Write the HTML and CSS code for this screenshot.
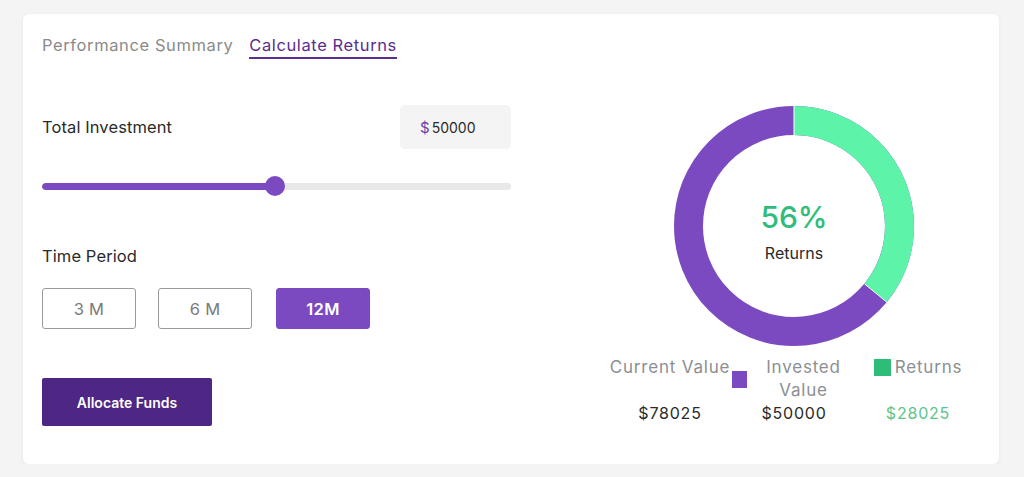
FILE: index.html
```html
<!DOCTYPE html>
<html>
<head>
<meta charset="utf-8">
<link rel="stylesheet" href="styles.css">
</head>
<body>
<div class="card">
  <div class="tabs">
    <span class="tab">Performance Summary</span>
    <span class="tab active">Calculate Returns</span>
  </div>
  <div class="body">
    <div class="left">
      <div class="inv-row">
        <span class="label">Total Investment</span>
        <div class="amount"><span class="cur">$</span>50000</div>
      </div>
      <div class="slider">
        <div class="track"><div class="fill" style="width:49.6%"></div></div>
        <div class="thumb"></div>
      </div>
      <div class="label period">Time Period</div>
      <div class="periods">
        <button class="pbtn">3 M</button>
        <button class="pbtn">6 M</button>
        <button class="pbtn on">12M</button>
      </div>
      <button class="allocate">Allocate Funds</button>
    </div>
    <div class="right">
      <div class="donut">
        <svg width="240" height="240" viewBox="0 0 240 240">
          <circle cx="120" cy="120" r="105.5" fill="none" stroke="#7b4ac0" stroke-width="29"/>
          <circle cx="120" cy="120" r="105.5" fill="none" stroke="#5df4a9" stroke-width="29" stroke-dasharray="238 663" transform="rotate(-90 120 120)"/>
          <line x1="120" y1="0" x2="120" y2="30" stroke="#fff" stroke-width="1"/>
          <line x1="190.5" y1="177.9" x2="213" y2="196.3" stroke="#fff" stroke-width="1"/>
        </svg>
        <div class="center">
          <div class="pct">56%</div>
          <div class="ret">Returns</div>
        </div>
      </div>
      <div class="legend">
        <div class="lg"><span class="lt">Current Value</span></div>
        <div class="lg"><span class="sq purple"></span><span class="lt grow">Invested Value</span></div>
        <div class="lg center-j"><span class="sq green"></span><span class="lt">Returns</span></div>
        <div class="val">$78025</div>
        <div class="val">$50000</div>
        <div class="val gr">$28025</div>
      </div>
    </div>
  </div>
</div>
</body>
</html>
```

FILE: styles.css
```css
* { box-sizing: border-box; }
html, body { margin: 0; }
body {
  background: #f4f4f5;
  padding: 14px 25px 0 23px;
  font-family: Inter, "Noto Sans", sans-serif;
  color: #2c2c2c;
}
.card {
  background: #fff;
  height: 450px;
  border-radius: 6px;
  box-shadow: 0 1px 4px rgba(0,0,0,0.06);
  padding: 20px 11px 0 19px;
}
.tabs {
  display: flex;
  gap: 16px;
}
.tab {
  font-size: 16.5px;
  line-height: 22px;
  padding-bottom: 1px;
  color: #8a8a8a;
  border-bottom: 2px solid transparent;
  letter-spacing: 0.6px;
}
.tab.active {
  color: #5a2d8e;
  border-bottom-color: #5a2d8e;
}
.body {
  display: flex;
  align-items: flex-start;
}
.left {
  width: 469px;
  margin-top: 46px;
  display: flex;
  flex-direction: column;
  align-items: flex-start;
}
.inv-row {
  width: 100%;
  height: 44px;
  display: flex;
  align-items: center;
  justify-content: space-between;
}
.label {
  font-size: 16.5px;
  font-weight: 400;
  color: #2a2a2a;
  letter-spacing: 0.1px;
}
.amount {
  width: 111px;
  height: 44px;
  background: #f4f4f4;
  border-radius: 5px;
  display: flex;
  align-items: center;
  padding-left: 20px;
  font-size: 14px;
  color: #2a2a2a;
}
.cur {
  color: #6a3ea8;
  font-size: 15px;
  margin-right: 2px;
}
.slider {
  width: 100%;
  height: 20px;
  margin-top: 27px;
  display: grid;
  align-items: center;
}
.track {
  grid-area: 1 / 1;
  height: 7px;
  border-radius: 4px;
  background: #e8e8e8;
  overflow: hidden;
}
.fill {
  height: 100%;
  background: #7b4ac0;
  border-radius: 4px;
}
.thumb {
  grid-area: 1 / 1;
  width: 20px;
  height: 20px;
  border-radius: 50%;
  background: #7b4ac0;
  margin-left: 223px;
}
.period {
  margin-top: 49px;
  line-height: 22px;
}
.periods {
  margin-top: 21px;
  display: flex;
  gap: 22px;
}
.pbtn {
  width: 94px;
  height: 41px;
  border: 1px solid #9a9a9a;
  border-radius: 3px;
  background: #fff;
  color: #7a7a7a;
  font-family: Inter, sans-serif;
  font-size: 16.5px;
  letter-spacing: 0.3px;
  padding: 0;
}
.pbtn.on {
  margin-left: 2px;
  background: #7b4ac0;
  border-color: #7b4ac0;
  color: #fff;
  font-weight: 600;
}
.allocate {
  margin-top: 49px;
  width: 170px;
  height: 48px;
  border: none;
  border-radius: 2px;
  background: #4e2683;
  color: #fff;
  font-family: Inter, sans-serif;
  font-weight: 600;
  font-size: 14px;
  padding: 0;
}
.right {
  width: 388px;
  margin-left: 89px;
  margin-top: 47px;
  display: flex;
  flex-direction: column;
  align-items: center;
}
.donut {
  width: 240px;
  height: 240px;
  display: grid;
}
.donut svg, .donut .center { grid-area: 1 / 1; }
.center {
  display: flex;
  flex-direction: column;
  align-items: center;
  padding-top: 93px;
}
.pct {
  font-size: 30px;
  line-height: 36px;
  font-weight: 500;
  color: #2fbd7c;
}
.ret {
  margin-top: 6px;
  font-size: 16px;
  line-height: 24px;
  color: #2a2a2a;
}
.legend {
  margin-top: 10px;
  width: 372px;
  display: grid;
  grid-template-columns: repeat(3, 124px);
  align-items: start;
}
.lg {
  display: flex;
  align-items: center;
  justify-content: center;
}
.lt {
  font-size: 17px;
  line-height: 23px;
  color: #8b8f94;
  white-space: nowrap;
  letter-spacing: 0.8px;
}
.lt.grow {
  flex: 1;
  white-space: normal;
  text-align: center;
  padding: 0 4px 0 8px;
}
.sq {
  flex: none;
  height: 17px;
}
.sq.purple { width: 15px; background: #7b4ac0; }
.sq.green { width: 17px; background: #2dbd78; margin-right: 4px; }
.val {
  text-align: center;
  font-size: 16px;
  line-height: 23px;
  color: #2a2a2a;
  letter-spacing: 0.8px;
}
.val.gr { color: #5cc58c; }
```
